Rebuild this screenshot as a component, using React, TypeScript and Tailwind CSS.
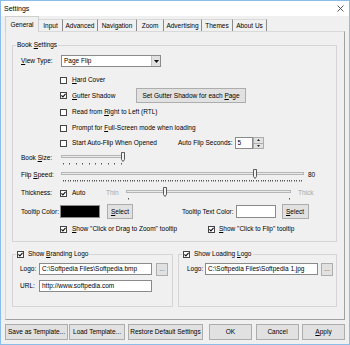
import React from "react";

function Cb({ checked }: { checked?: boolean }) {
  return (
    <span className="inline-flex w-[7px] h-[7px] border border-[#444444] bg-white items-center justify-center shrink-0">
      {checked && (
        <svg width="5" height="5" viewBox="0 0 5 5">
          <path d="M0.4 2.4 L1.9 3.9 L4.6 0.9" stroke="#111" strokeWidth="1.2" fill="none" />
        </svg>
      )}
    </span>
  );
}

function Btn({ children, className }: { children: React.ReactNode; className: string }) {
  return (
    <div className={"flex items-center justify-center bg-[#e1e1e1] border border-[#adadad] whitespace-nowrap shrink-0 " + className}>
      {children}
    </div>
  );
}

function Slider({ w, thumb, ticks }: { w: number; thumb: number; ticks: number[] }) {
  return (
    <svg width={w} height={14} className="shrink-0">
      <rect x={0.5} y={4.5} width={w - 1} height={2} fill="#e7eaea" stroke="#b5b5b5" />
      {ticks.map((t, i) => (
        <line key={i} x1={t + 0.5} x2={t + 0.5} y1={12} y2={13.5} stroke="#555" strokeWidth={1} />
      ))}
      <path
        d={`M${thumb - 1.5} 1.5 h3 v7 l-1.5 2 l-1.5 -2 z`}
        fill="#f3f3f3"
        stroke="#333"
        strokeWidth={0.8}
      />
    </svg>
  );
}

const bookTicks = Array.from({ length: 10 }, (_, i) => 2 + Math.round(i * 6.4));
const speedTicks = Array.from({ length: 101 }, (_, i) => 2 + Math.round(i * 2.38));

function Tabs() {
  const tabs: [string, string][] = [
    ["Input", "w-[24px]"],
    ["Advanced", "w-[35px]"],
    ["Navigation", "w-[39px]"],
    ["Zoom", "w-[27px]"],
    ["Advertising", "w-[38px]"],
    ["Themes", "w-[31px]"],
    ["About Us", "w-[34px]"],
  ];
  return (
    <div className="flex items-end h-[15px]">
      <div className="relative z-10 w-[34px] h-[16px] -mb-px bg-[#f0f0f0] border-l border-t border-r border-[#cfcfcf] flex items-center justify-center">
        General
      </div>
      {tabs.map(([t, w]) => (
        <div
          key={t}
          className={"h-[12px] border-t border-[#d9d9d9] border-r border-r-[#8a8a8a] flex items-center justify-center " + w}
        >
          {t}
        </div>
      ))}
    </div>
  );
}

function Input({ text, className }: { text: string; className: string }) {
  return (
    <div className={"h-[12px] bg-white border border-[#8a8a8a] flex items-center pl-[2px] whitespace-nowrap shrink-0 " + className}>
      {text}
    </div>
  );
}

function BookSettings() {
  return (
    <div className="relative mt-[13px] ml-[6px] w-[325px] h-[197px] border border-[#d5d5d5] flex flex-col">
      <div className="absolute left-[3px] top-[-5px] px-[1px] bg-[#f0f0f0]">
        Book <u>S</u>ettings
      </div>
      {/* View type */}
      <div className="flex items-center h-[14px] pl-[8px] mt-[8px]">
        <span className="w-[39px] shrink-0">
          <u>V</u>iew Type:
        </span>
        <div className="ml-[1px] w-[100px] h-[12px] bg-white border border-[#8a8a8a] flex items-center justify-between">
          <span className="pl-[2px]">Page Flip</span>
          <div className="w-[9px] h-[10px] bg-[#e1e1e1] border-l border-[#c0c0c0] flex items-center justify-center">
            <svg width="5" height="3" viewBox="0 0 5 3">
              <path d="M0 0 H5 L2.5 3 Z" fill="#111" />
            </svg>
          </div>
        </div>
      </div>
      {/* Hard cover */}
      <div className="flex items-center h-[14px] pl-[47px] mt-[5px]">
        <Cb />
        <span className="ml-[5px]">
          <u>H</u>ard Cover
        </span>
      </div>
      {/* Gutter */}
      <div className="flex items-center h-[15px] pl-[47px] mt-[1px]">
        <div className="w-[76px] flex items-center shrink-0">
          <Cb checked />
          <span className="ml-[5px]">
            <u>G</u>utter Shadow
          </span>
        </div>
        <Btn className="w-[110px] h-[15px]">
          <span>
            Set Gutter Shadow for each <u>P</u>age
          </span>
        </Btn>
      </div>
      <div className="flex items-center h-[14px] pl-[47px] mt-[2px]">
        <Cb />
        <span className="ml-[5px]">
          Read from <u>R</u>ight to Left (RTL)
        </span>
      </div>
      <div className="flex items-center h-[14px] pl-[47px] mt-[2px]">
        <Cb />
        <span className="ml-[5px]">
          Prompt for <u>F</u>ull-Screen mode when loading
        </span>
      </div>
      <div className="flex items-center h-[14px] pl-[47px] mt-[1px]">
        <div className="w-[118px] flex items-center shrink-0">
          <Cb />
          <span className="ml-[5px] whitespace-nowrap">Start Auto-Flip When Opened</span>
        </div>
        <span className="whitespace-nowrap">Auto Flip Seconds:</span>
        <Input text="5" className="ml-[2px] w-[18px]" />
        <div className="w-[11px] h-[12px] flex flex-col shrink-0">
          <div className="flex-1 bg-[#e1e1e1] border border-[#adadad] flex items-center justify-center">
            <svg width="3" height="2" viewBox="0 0 3 2">
              <path d="M0 2 H3 L1.5 0 Z" fill="#222" />
            </svg>
          </div>
          <div className="flex-1 bg-[#e1e1e1] border border-t-0 border-[#adadad] flex items-center justify-center">
            <svg width="3" height="2" viewBox="0 0 3 2">
              <path d="M0 0 H3 L1.5 2 Z" fill="#222" />
            </svg>
          </div>
        </div>
      </div>
      {/* Book size */}
      <div className="flex items-center h-[14px] pl-[8px] mt-[1px]">
        <span className="w-[40px] shrink-0">
          Book <u>S</u>ize:
        </span>
        <Slider w={64} thumb={62} ticks={bookTicks} />
      </div>
      {/* Flip speed */}
      <div className="flex items-center h-[14px] pl-[8px] mt-[3px]">
        <span className="w-[40px] shrink-0">
          Flip <u>S</u>peed:
        </span>
        <Slider w={243} thumb={194} ticks={speedTicks} />
        <span className="ml-[4px]">80</span>
      </div>
      {/* Thickness */}
      <div className="flex items-center h-[14px] pl-[8px] mt-[4px]">
        <span className="w-[39px] shrink-0">Thickness:</span>
        <div className="w-[46px] flex items-center shrink-0">
          <Cb checked />
          <span className="ml-[5px]">Auto</span>
        </div>
        <span className="w-[20px] text-[#a6a6a6] shrink-0">Thin</span>
        <Slider w={165} thumb={39} ticks={[2, 163]} />
        <span className="ml-[7px] text-[#a6a6a6]">Thick</span>
      </div>
      {/* Tooltip colors */}
      <div className="flex items-center h-[15px] pl-[8px] mt-[4px]">
        <span className="w-[39px] shrink-0 whitespace-nowrap">Tooltip Color:</span>
        <div className="w-[40px] h-[13px] bg-black border border-[#8a8a8a] shrink-0" />
        <Btn className="ml-[7px] w-[26px] h-[15px]">
          <span>
            <u>S</u>elect
          </span>
        </Btn>
        <span className="ml-[49px] whitespace-nowrap">Tooltip Text Color:</span>
        <div className="ml-[2px] w-[40px] h-[13px] bg-white border border-[#8a8a8a] shrink-0" />
        <Btn className="ml-[6px] w-[27px] h-[15px]">
          <span>
            <u>S</u>elect
          </span>
        </Btn>
      </div>
      {/* tooltips */}
      <div className="flex items-center h-[14px] pl-[47px] mt-[3px]">
        <div className="w-[148px] flex items-center shrink-0">
          <Cb checked />
          <span className="ml-[5px] whitespace-nowrap">
            <u>S</u>how "Click or Drag to Zoom" tooltip
          </span>
        </div>
        <Cb checked />
        <span className="ml-[4px] whitespace-nowrap">
          <u>S</u>how "Click to Flip" tooltip
        </span>
      </div>
    </div>
  );
}

function LogoGroups() {
  return (
    <div className="flex mt-[12px] ml-[6px] gap-[5px]">
      <div className="relative w-[161px] h-[53px] border border-[#d5d5d5] flex flex-col">
        <div className="absolute left-[3px] top-[-5px] px-[1px] bg-[#f0f0f0] flex items-center">
          <Cb checked />
          <span className="ml-[4px]">
            Show <u>B</u>randing Logo
          </span>
        </div>
        <div className="flex items-center h-[14px] pl-[7px] mt-[7px]">
          <span className="w-[19px] shrink-0">Logo:</span>
          <Input text="C:\Softpedia Files\Softpedia.bmp" className="w-[113px]" />
          <Btn className="ml-[4px] w-[12px] h-[13px]">
            <span className="text-[#555]">...</span>
          </Btn>
        </div>
        <div className="flex items-center h-[14px] pl-[7px] mt-[3px]">
          <span className="w-[19px] shrink-0">URL:</span>
          <Input text="http://www.softpedia.com" className="w-[113px]" />
        </div>
      </div>
      <div className="relative w-[159px] h-[53px] border border-[#d5d5d5] flex flex-col">
        <div className="absolute left-[3px] top-[-5px] px-[1px] bg-[#f0f0f0] flex items-center">
          <Cb checked />
          <span className="ml-[4px]">
            Show Loading <u>L</u>ogo
          </span>
        </div>
        <div className="flex items-center h-[14px] pl-[8px] mt-[7px]">
          <span className="w-[18px] shrink-0">Logo:</span>
          <Input text="C:\Softpedia Files\Softpedia 1.jpg" className="w-[113px]" />
          <Btn className="ml-[3px] w-[12px] h-[13px]">
            <span className="text-[#555]">...</span>
          </Btn>
        </div>
      </div>
    </div>
  );
}

export default function App() {
  return (
    <div className="w-[350px] h-[345px] bg-[#f0f0f0] border border-[#8cbde8] flex flex-col overflow-hidden text-black text-[6.5px] leading-[8px] font-['Liberation_Sans',Arial,sans-serif]">
      <div className="h-[15px] bg-white flex items-center justify-between pl-[3px] pr-[5px] shrink-0">
        <span className="text-[7px]">Settings</span>
        <svg width="7" height="7" viewBox="0 0 7 7">
          <path d="M0.5 0.5 L6.5 6.5 M6.5 0.5 L0.5 6.5" stroke="#444" strokeWidth="0.9" />
        </svg>
      </div>
      <div className="flex flex-col px-[4px]">
        <Tabs />
        <div className="h-[289px] border border-[#d9d9d9] border-r-[#a0a0a0] border-b-[#a0a0a0] flex flex-col">
          <BookSettings />
          <LogoGroups />
        </div>
        <div className="flex items-center mt-[4px] h-[16px]">
          <Btn className="w-[63px] h-[16px]">Save as Template...</Btn>
          <Btn className="ml-[1px] w-[56px] h-[16px]">Load Template...</Btn>
          <Btn className="ml-[3px] w-[75px] h-[16px]">Restore Default Settings</Btn>
          <Btn className="ml-[6px] w-[43px] h-[16px]">OK</Btn>
          <Btn className="ml-[4px] w-[43px] h-[16px]">Cancel</Btn>
          <Btn className="ml-[3px] w-[43px] h-[16px]">
            <span>
              <u>A</u>pply
            </span>
          </Btn>
        </div>
      </div>
    </div>
  );
}
